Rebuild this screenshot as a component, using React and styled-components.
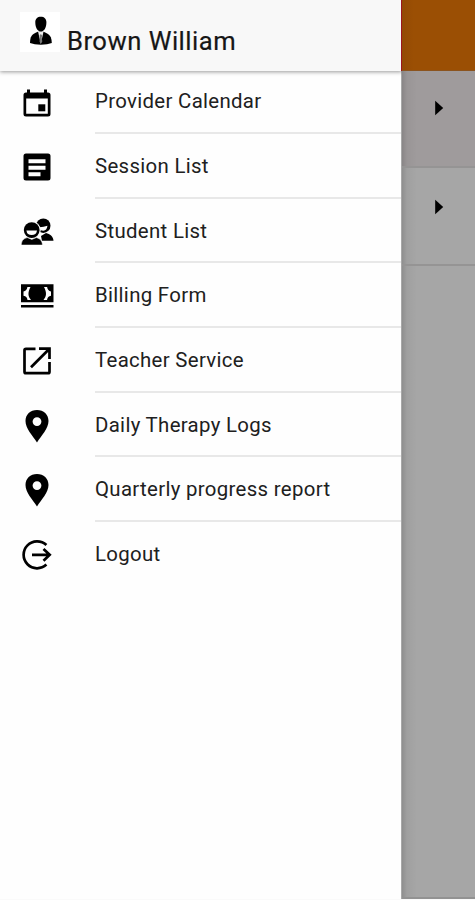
import React from "react";
import styled, { createGlobalStyle } from "styled-components";

const GlobalStyle = createGlobalStyle`
  * { box-sizing: border-box; }
  body { margin: 0; background: #fafafa; font-family: Roboto, "Liberation Sans", sans-serif; }
`;

const Screen = styled.main`
  display: flex;
  width: 475px;
  height: 900px;
  overflow: hidden;
`;

const Drawer = styled.aside`
  width: 402px;
  height: 899px;
  flex: none;
  background: #fefefe;
  border-right: 1px solid #a8a8a8;
`;

const Header = styled.header`
  position: relative;
  display: flex;
  height: 71px;
  margin-right: -1px;
  padding: 12px 0 0 20px;
  background: #f8f8f8;
  border-right: 1px solid #9c1620;
  box-shadow: 0 1px 4px rgba(0, 0, 0, 0.4);
  clip-path: inset(0 0 -6px 0);
`;

const Avatar = styled.div`
  width: 40px;
  height: 40px;
  background: #fff;
`;

const Name = styled.h1`
  margin: 14px 0 0 7px;
  font-size: 25.6px;
  line-height: 30px;
  font-weight: 400;
  color: #161616;
  -webkit-text-stroke: 0.2px #161616;
  letter-spacing: 0.5px;
  white-space: nowrap;
`;

const Menu = styled.nav`
  margin-top: -1.7px;
`;

const MenuItem = styled.a`
  display: flex;
  height: 64.67px;
  padding-left: 21px;
  color: #000;
`;

const IconSlot = styled.span`
  width: 32px;
  margin-right: 42px;
  padding-top: 17.2px;
`;

const Label = styled.span`
  flex: 1;
  border-bottom: 2px solid ${(p) => (p.$last ? "transparent" : "#e8e8e8")};
  font-size: 20.4px;
  line-height: 65px;
  letter-spacing: 0.32px;
  color: #202020;
  white-space: nowrap;
`;

const Backdrop = styled.section`
  flex: 1;
  height: 899px;
  background: linear-gradient(90deg, rgba(0, 0, 0, 0.14), rgba(0, 0, 0, 0.04) 5px, transparent 15px), #a6a6a6;
  border-bottom: 2px solid #929292;
`;

const AppBar = styled.div`
  height: 71px;
  background: linear-gradient(90deg, #934a04, #9b4f04 12px);
  border-bottom: 1px solid #8b541f;
`;

const Entry = styled.div`
  height: ${(p) => p.$height}px;
  padding: ${(p) => p.$top}px 0 0 32px;
  background: linear-gradient(90deg, rgba(0, 0, 0, 0.14), rgba(0, 0, 0, 0.04) 5px, transparent 15px), ${(p) => p.$color};
  border-bottom: 2px solid #959494;
`;

const Svg = styled.svg`
  display: block;
  overflow: visible;
`;

function Icon({ children }) {
  return <Svg width="32" height="32" viewBox="0 0 32 32" fill="currentColor">{children}</Svg>;
}

const Calendar = () => (
  <Icon>
    <path fillRule="evenodd" d="M6 2.5h3v3h14v-3h3v3h1a2.5 2.5 0 0 1 2.5 2.5v19a2.5 2.5 0 0 1-2.5 2.5H5A2.5 2.5 0 0 1 2.5 27V8A2.5 2.5 0 0 1 5 5.5h1zM5.2 11.5v15.3h21.6V11.5z" />
    <path d="M17.3 17.3h7v7h-7z" />
  </Icon>
);

const Article = () => (
  <Icon>
    <path fillRule="evenodd" d="M5 2.5h22a2.5 2.5 0 0 1 2.5 2.5v22a2.5 2.5 0 0 1-2.5 2.5H5A2.5 2.5 0 0 1 2.5 27V5A2.5 2.5 0 0 1 5 2.5zM7.5 8.2v4h17v-4zM7.5 14.7v4h17v-4zM7.5 21.2v4h12v-4z" />
  </Icon>
);

const People = () => (
  <Icon>
    <g>
      <ellipse cx="22.3" cy="9.7" rx="7.2" ry="7.3" />
      <path d="M17 11.1q5 .3 9.5-1.3-.8 4.8-4 4.9-3.8 0-5.5-3.6z" fill="#fefefe" />
      <path d="M20 20.1l5-3.2c4 1.2 7 2.8 7.5 7.8H21z" />
    </g>
    <g>
      <ellipse cx="10.7" cy="14.2" rx="9" ry="9" fill="#fefefe" />
      <ellipse cx="10.7" cy="14.1" rx="7.9" ry="7.9" />
      <path d="M5.4 14.5h10.6q-.7 4.6-5.3 4.6t-5.3-4.6z" fill="#fefefe" />
      <path d="M.2 29.1c.4-5.2 2.7-6.6 6.1-7.5l4.5 1.8 4.5-1.8c3.5 1.1 5.8 2.5 6.2 7.5z" stroke="#fefefe" strokeWidth=".6" />
    </g>
  </Icon>
);

const Cash = () => (
  <Icon>
    <path d="M0 4.3h32.5v18H0zM0 25h32.5v2.5H0z" />
    <path d="M9.5 7c-3 6-2.5 9 .5 13H6.5c-.5-2.8-1.5-3.5-4-4.2v-4.3c2.2-.6 3.5-1.8 3.9-4.5zM23 7c3 6 2.5 9-.5 13H26c.5-2.8 1.5-3.5 4-4.2v-4.3c-2.2-.6-3.5-1.8-3.9-4.5z" fill="#fefefe" />
  </Icon>
);

const OpenOut = () => (
  <Icon>
    <path d="M14.5 3.8H5A1.5 1.5 0 0 0 3.5 5.3v21.4A1.5 1.5 0 0 0 5 28.2h22a1.5 1.5 0 0 0 1.5-1.5V17M18 3.7h10.5v10.2M28.2 4L10 22.2" fill="none" stroke="currentColor" strokeWidth="2.7" />
  </Icon>
);

const Pin = () => (
  <Icon>
    <path fillRule="evenodd" d="M16 0C9.3 0 4.5 4.6 4.5 11c0 7.5 7 14.5 11.5 21.5C20.5 25.5 27.5 18.5 27.5 11 27.5 4.6 22.7 0 16 0zm0 7.2a4.4 4.4 0 1 1 0 8.8 4.4 4.4 0 0 1 0-8.8z" />
  </Icon>
);

const Logout = () => (
  <Icon>
    <path d="M25.4 6A13.5 13.5 0 1 0 25.4 25.6M11 15.8h18M22.5 9.9l6.2 5.9-6.2 6" fill="none" stroke="currentColor" strokeWidth="2.7" />
  </Icon>
);

const Person = () => (
  <Svg width="40" height="40" viewBox="0 0 40 40">
    <path d="M10 31c.2-6.5 1.3-8.7 7.8-11.3h5.8C30 22.3 31.5 24.5 31.8 31q-4.1 1.8-10.9 1.8T10 31z" />
    <path d="M18 19.2L20.8 32l2.8-12.8z" fill="#eee" />
    <path d="M20.8 22l-1.2 1.5.4 2-.5 4 1.4 2.2 1.4-2.2-.6-4 .5-2z" fill="#777" />
    <path d="M15.3 10.3c0-3.5 2.2-5.5 5.5-5.5s5.6 2 5.6 5.5c0 5.5-2.2 9.3-5.5 9.3s-5.6-3.8-5.6-9.3z" />
  </Svg>
);

const Caret = () => (
  <Svg width="12" height="16" viewBox="0 0 12 16"><path d="M1.2.7L9.2 8l-8 7.3z" /></Svg>
);

const items = [
  ["Provider Calendar", Calendar],
  ["Session List", Article],
  ["Student List", People],
  ["Billing Form", Cash],
  ["Teacher Service", OpenOut],
  ["Daily Therapy Logs", Pin],
  ["Quarterly progress report", Pin],
  ["Logout", Logout],
];

export default function App() {
  return (
    <>
      <GlobalStyle />
      <Screen>
        <Drawer>
          <Header>
            <Avatar><Person /></Avatar>
            <Name>Brown William</Name>
          </Header>
          <Menu>
            {items.map(([label, Glyph], i) => (
              <MenuItem key={label}>
                <IconSlot><Glyph /></IconSlot>
                <Label $last={i === items.length - 1}>{label}</Label>
              </MenuItem>
            ))}
          </Menu>
        </Drawer>
        <Backdrop>
          <AppBar />
          <Entry $height={97} $top={29} $color="#9f9b9c"><Caret /></Entry>
          <Entry $height={98} $top={31} $color="#a6a6a6"><Caret /></Entry>
        </Backdrop>
      </Screen>
    </>
  );
}
